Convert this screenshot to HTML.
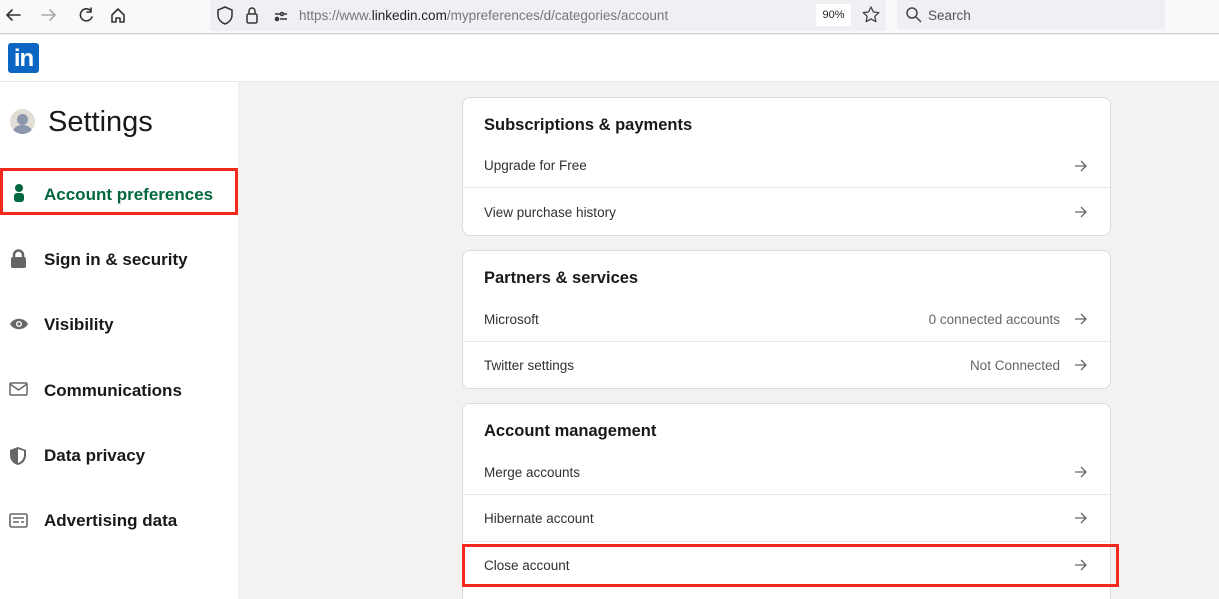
<!DOCTYPE html>
<html><head><meta charset="utf-8"><style>
*{margin:0;padding:0;box-sizing:border-box}
html,body{width:1219px;height:599px;overflow:hidden}
body{font-family:"Liberation Sans",sans-serif;background:#f4f2f0;position:relative;color:#191919}
.abs{position:absolute}
.bar{left:0;top:0;width:1219px;height:34px;background:#f9f9fb;border-bottom:1px solid #cfcfd8}
.url{left:210px;top:0;width:676px;height:31px;background:#f0f0f4}
.hdr{left:0;top:35px;width:1219px;height:47px;background:#fff;border-bottom:1px solid #e8e8e8}
.side{left:0;top:82px;width:238px;height:517px;background:#fff}
.card{left:462px;width:649px;background:#fff;border:1px solid #dcdcdc;border-radius:8px}
.t{position:absolute;left:21px;font-size:16.5px;font-weight:bold;color:#191919}
.r{position:absolute;left:21px;font-size:13.5px;color:#303030}
.ln{position:absolute;left:0;width:100%;height:1px;background:#e8e8e8}
.ar{position:absolute;right:22px;top:0}
.rv{position:absolute;right:50px;font-size:13.5px;color:#666}
.nav{position:absolute;left:44px;font-size:17px;font-weight:bold;color:#191919}
.ic{position:absolute;left:9px}
</style></head><body>
<div class="abs bar"></div>
<div class="abs url"></div>
<svg class="abs" style="left:4px;top:6px" width="130" height="20" fill="none" stroke-width="1.6" stroke-linecap="round" stroke-linejoin="round">
<path d="M16 9H3M8 4L3 9l5 5" stroke="#333"/>
<path d="M38 9h13M46 4l5 5-5 5" stroke="#aaa"/>
<path d="M87 5a6 6 0 1 0 1 6M87 2v4h-4" stroke="#333"/>
<path d="M108 9l6-6 6 6v7h-4v-4h-4v4h-4z" stroke="#333"/>
</svg>
<svg class="abs" style="left:215px;top:5px" width="80" height="22" fill="none" stroke="#333" stroke-width="1.5">
<path d="M10 2l7 3v5c0 5-4 8-7 9-3-1-7-4-7-9V5z"/>
<rect x="32" y="9" width="10" height="9" rx="1.5"/><path d="M34 9V6a3 3 0 0 1 6 0v3"/>
<path d="M60 9h6M68 9h4M60 14h3M65 14h7"/><circle cx="67" cy="9" r="1.5"/><circle cx="62" cy="14" r="1.5"/>
</svg>
<div class="abs" style="left:299px;top:8px;font-size:13.5px;color:#777">https://www.<span style="color:#222">linkedin.com</span>/mypreferences/d/categories/account</div>
<div class="abs" style="left:816px;top:4px;width:35px;height:22px;background:#fff;font-size:11px;line-height:22px;text-align:center;color:#222">90%</div>
<svg class="abs" style="left:861px;top:5px" width="20" height="20" fill="none" stroke="#444" stroke-width="1.3" stroke-linejoin="round"><path d="M10 2l2.4 5 5.4.6-4 3.7 1.1 5.4L10 14l-4.9 2.7 1.1-5.4-4-3.7 5.4-.6z"/></svg>
<div class="abs" style="left:897px;top:0;width:268px;height:29px;background:#f0f0f4"></div>
<svg class="abs" style="left:905px;top:6px" width="18" height="18" fill="none" stroke="#444" stroke-width="1.5"><circle cx="7" cy="7" r="5"/><path d="M11 11l5 5"/></svg>
<div class="abs" style="left:928px;top:8px;font-size:13.5px;color:#555">Search</div>
<div class="abs hdr"></div>
<div class="abs" style="left:8px;top:43px;width:31px;height:30px;background:#0a66c2;border-radius:3px;color:#fff;font-weight:bold;font-size:24px;line-height:31px;text-align:center;letter-spacing:-1px">in</div>
<div class="abs side"></div>
<div class="abs" style="left:10px;top:109px;width:25px;height:25px;border-radius:50%;background:#e2ddd6;overflow:hidden"><div style="position:absolute;left:7px;top:5px;width:11px;height:11px;border-radius:50%;background:#8a97ac"></div><div style="position:absolute;left:3px;top:16px;width:19px;height:14px;border-radius:50%;background:#8a97ac"></div></div>
<div class="abs" style="left:48px;top:106px;font-size:29px;color:#191919">Settings</div>
<div class="abs" style="left:0;top:168px;width:238px;height:47px;border:3px solid #f5281e"></div>
<svg class="ic" style="top:183px" width="20" height="20"><circle cx="10" cy="5" r="4" fill="#04683f"/><rect x="5" y="10" width="10" height="9" rx="3" fill="#04683f"/></svg>
<div class="nav" style="top:185px;color:#04683f">Account preferences</div>
<svg class="ic" style="top:249px" width="20" height="20"><rect x="2" y="8" width="15" height="11" rx="2" fill="#666"/><path d="M5 8V6a4.5 4.5 0 0 1 9 0v2" stroke="#666" stroke-width="2.5" fill="none"/></svg>
<div class="nav" style="top:250px">Sign in &amp; security</div>
<svg class="ic" style="top:315px" width="22" height="20"><path d="M1 9c4-7 14-7 18 0-4 7-14 7-18 0z" fill="#666"/><circle cx="10" cy="9" r="3" fill="#fff"/><circle cx="10" cy="9" r="1.6" fill="#666"/></svg>
<div class="nav" style="top:315px">Visibility</div>
<svg class="ic" style="top:380px" width="20" height="20" fill="none" stroke="#666" stroke-width="1.5"><rect x="1" y="3" width="17" height="12" rx="1"/><path d="M1 4l8.5 6 8.5-6"/></svg>
<div class="nav" style="top:381px">Communications</div>
<svg class="ic" style="top:446px" width="20" height="20"><path d="M9 1l8 3v5c0 6-4 9-8 10-4-1-8-4-8-10V4z" fill="#666"/><path d="M9 3l6 2v4c0 4-3 7-6 8z" fill="#fff"/></svg>
<div class="nav" style="top:446px">Data privacy</div>
<svg class="ic" style="top:511px" width="20" height="20" fill="none" stroke="#666" stroke-width="1.6"><rect x="1" y="3" width="17" height="13" rx="1.5"/><path d="M4 7h11M4 11h6M12 11h3"/></svg>
<div class="nav" style="top:511px">Advertising data</div>

<svg width="0" height="0" style="position:absolute"><defs><symbol id="a" viewBox="0 0 14 14"><path d="M1 7h11M7 2l5 5-5 5" fill="none" stroke="#666" stroke-width="1.3"/></symbol></defs></svg>

<div class="abs card" style="top:97px;height:139px">
<div class="t" style="top:18px">Subscriptions &amp; payments</div>
<div class="r" style="top:60px">Upgrade for Free</div><svg class="ar" style="top:61px" width="14" height="14"><use href="#a"/></svg>
<div class="ln" style="top:89px"></div>
<div class="r" style="top:107px">View purchase history</div><svg class="ar" style="top:107px" width="14" height="14"><use href="#a"/></svg>
</div>
<div class="abs card" style="top:250px;height:139px">
<div class="t" style="top:18px">Partners &amp; services</div>
<div class="r" style="top:61px">Microsoft</div><div class="rv" style="top:61px">0 connected accounts</div><svg class="ar" style="top:61px" width="14" height="14"><use href="#a"/></svg>
<div class="ln" style="top:90px"></div>
<div class="r" style="top:107px">Twitter settings</div><div class="rv" style="top:107px">Not Connected</div><svg class="ar" style="top:107px" width="14" height="14"><use href="#a"/></svg>
</div>
<div class="abs card" style="top:403px;height:210px">
<div class="t" style="top:18px">Account management</div>
<div class="r" style="top:61px">Merge accounts</div><svg class="ar" style="top:61px" width="14" height="14"><use href="#a"/></svg>
<div class="ln" style="top:90px"></div>
<div class="r" style="top:107px">Hibernate account</div><svg class="ar" style="top:107px" width="14" height="14"><use href="#a"/></svg>
<div class="ln" style="top:137px"></div>
<div class="r" style="top:154px">Close account</div><svg class="ar" style="top:154px" width="14" height="14"><use href="#a"/></svg>
</div>
<div class="abs" style="left:462px;top:544px;width:657px;height:43px;border:3px solid #f5281e"></div>
</body></html>
